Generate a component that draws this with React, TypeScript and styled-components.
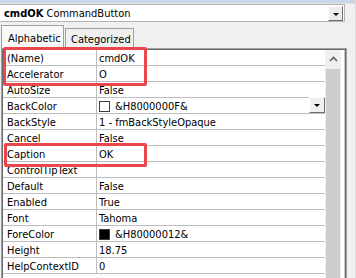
import styled, { createGlobalStyle } from "styled-components";

const GlobalStyle = createGlobalStyle`
    html, body {
        margin: 0;
        padding: 0;
        background: #f0f0f0;
    }
    * {
        box-sizing: border-box;
    }
`

type Prop = {
    name: string;
    value: string;
    swatch?: string;
    drop?: boolean;
}

const props: Prop[] = [
    { name: "(Name)", value: "cmdOK" },
    { name: "Accelerator", value: "O" },
    { name: "AutoSize", value: "False" },
    { name: "BackColor", value: "&H8000000F&", swatch: "#ffffff", drop: true },
    { name: "BackStyle", value: "1 - fmBackStyleOpaque" },
    { name: "Cancel", value: "False" },
    { name: "Caption", value: "OK" },
    { name: "ControlTipText", value: "" },
    { name: "Default", value: "False" },
    { name: "Enabled", value: "True" },
    { name: "Font", value: "Tahoma" },
    { name: "ForeColor", value: "&H80000012&", swatch: "#000000" },
    { name: "Height", value: "18.75" },
    { name: "HelpContextID", value: "0" },
]

const App = () => {
    return (
        <>
            <GlobalStyle />
            <Window>
                <TopStrip />
                <ComboRow>
                    <Combo>
                        <b>cmdOK</b>&nbsp;CommandButton
                        <ComboButton><Arrow /></ComboButton>
                    </Combo>
                </ComboRow>
                <TabStrip>
                    <Tab $active>Alphabetic</Tab>
                    <Tab>Categorized</Tab>
                </TabStrip>
                <GridFrame>
                    <GridInner>
                        <Table>
                            {props.map((p) => (
                                <Row key={p.name}>
                                    <NameCell>{p.name}</NameCell>
                                    <ValueCell>
                                        {p.swatch && <Swatch $color={p.swatch} />}
                                        {p.value}
                                        {p.drop && <RowDrop><Arrow /></RowDrop>}
                                    </ValueCell>
                                </Row>
                            ))}
                        </Table>
                        <Scrollbar>
                            <ScrollUp>
                                <svg width="9" height="6" viewBox="0 0 9 6">
                                    <path d="M1 5 L4.5 1.5 L8 5" fill="none" stroke="#606060" strokeWidth="1.6" />
                                </svg>
                            </ScrollUp>
                            <Thumb />
                        </Scrollbar>
                        <GridEdge />
                    </GridInner>
                </GridFrame>
                <Highlight style={{ left: 3, top: 47, width: 144, height: 39 }} />
                <Highlight style={{ left: 4, top: 143, width: 143, height: 24 }} />
            </Window>
        </>
    );
}

const Window = styled.div`
    position: relative;
    width: 356px;
    height: 278px;
    overflow: hidden;
    background: #f0f0f0;
    display: flex;
    flex-direction: column;
    font-family: "DejaVu Sans Condensed", "Liberation Sans", sans-serif;
    font-size: 11px;
    color: #000;
    border-right: 1px solid #dcdcdc;
`
const TopStrip = styled.div`
    height: 4px;
    background: #c7d7e8;
    border-bottom: 1px solid #e2e2e2;
    flex-shrink: 0;
`
const ComboRow = styled.div`
    height: 18px;
    flex-shrink: 0;
`
const Combo = styled.div`
    width: 345px;
    height: 18px;
    background: #fff;
    border: 1px solid #b4b4b4;
    border-left: none;
    display: flex;
    align-items: center;
    padding: 1px 0 0 4px;
    b {
        font-weight: 700;
    }
`
const ComboButton = styled.div`
    margin-left: auto;
    margin-right: 1px;
    width: 15px;
    height: 15px;
    background: #ececec;
    border: 1px solid;
    border-color: #fdfdfd #6e6e6e #6e6e6e #fdfdfd;
    display: flex;
    align-items: center;
    justify-content: center;
`
const Arrow = styled.span`
    width: 0;
    height: 0;
    border-left: 3px solid transparent;
    border-right: 3px solid transparent;
    border-top: 3px solid #000;
    margin-top: 1px;
`
const TabStrip = styled.div`
    height: 26px;
    flex-shrink: 0;
    display: flex;
    align-items: flex-end;
    padding-left: 1px;
`
const Tab = styled.div<{ $active?: boolean }>`
    height: ${(p) => (p.$active ? "23px" : "20px")};
    width: ${(p) => (p.$active ? "63px" : "69px")};
    margin-left: ${(p) => (p.$active ? "0" : "1px")};
    background: ${(p) => (p.$active ? "#f9f9f9" : "#f0f0f0")};
    border: 1px solid #a0a0a0;
    border-bottom: none;
    padding: ${(p) => (p.$active ? "6px 0 0 6px" : "4px 0 0 5px")};
    white-space: nowrap;
`
const GridFrame = styled.div`
    margin-left: 1px;
    width: 346px;
    flex: 1;
    border: 1px solid #a0a0a0;
    border-bottom: none;
    min-height: 0;
`
const GridInner = styled.div`
    height: 100%;
    border: 1px solid #696969;
    border-bottom: none;
    display: flex;
    background: #fff;
`
const Table = styled.div`
    width: 322px;
    display: flex;
    flex-direction: column;
`
const Row = styled.div`
    display: grid;
    grid-template-columns: 94px 1fr;
    height: 16px;
    flex-shrink: 0;
    border-bottom: 1px solid #bdbdbd;
`
const NameCell = styled.div`
    padding: 2px 0 0 4px;
    border-right: 1px solid #bdbdbd;
    line-height: 13px;
    white-space: nowrap;
    overflow: hidden;
`
const ValueCell = styled.div`
    padding: 2px 0 0 2px;
    display: flex;
    align-items: center;
    white-space: nowrap;
    line-height: 13px;
`
const Swatch = styled.span<{ $color: string }>`
    width: 11px;
    height: 11px;
    background: ${(p) => p.$color};
    border: 1px solid #3c3c3c;
    margin: -1px 5px 0 0;
    flex-shrink: 0;
`
const RowDrop = styled.div`
    margin-left: auto;
    width: 16px;
    height: 16px;
    margin-top: -3px;
    background: #f0f0f0;
    border: 1px solid;
    border-color: #fdfdfd #6e6e6e #6e6e6e #fdfdfd;
    display: flex;
    align-items: center;
    justify-content: center;
`
const Scrollbar = styled.div`
    width: 16px;
    display: flex;
    flex-direction: column;
    background: #f0f0f0;
`
const ScrollUp = styled.div`
    height: 18px;
    display: flex;
    align-items: center;
    justify-content: center;
`
const Thumb = styled.div`
    flex: 1;
    margin: 1px 1px 0;
    background: #cdcdcd;
`
const GridEdge = styled.div`
    flex: 1;
    background: #fff;
    border-right: 1px solid #c8c8c8;
`
const Highlight = styled.div`
    position: absolute;
    border: 3px solid #e9474b;
    border-radius: 2px;
    pointer-events: none;
`

export default App;
